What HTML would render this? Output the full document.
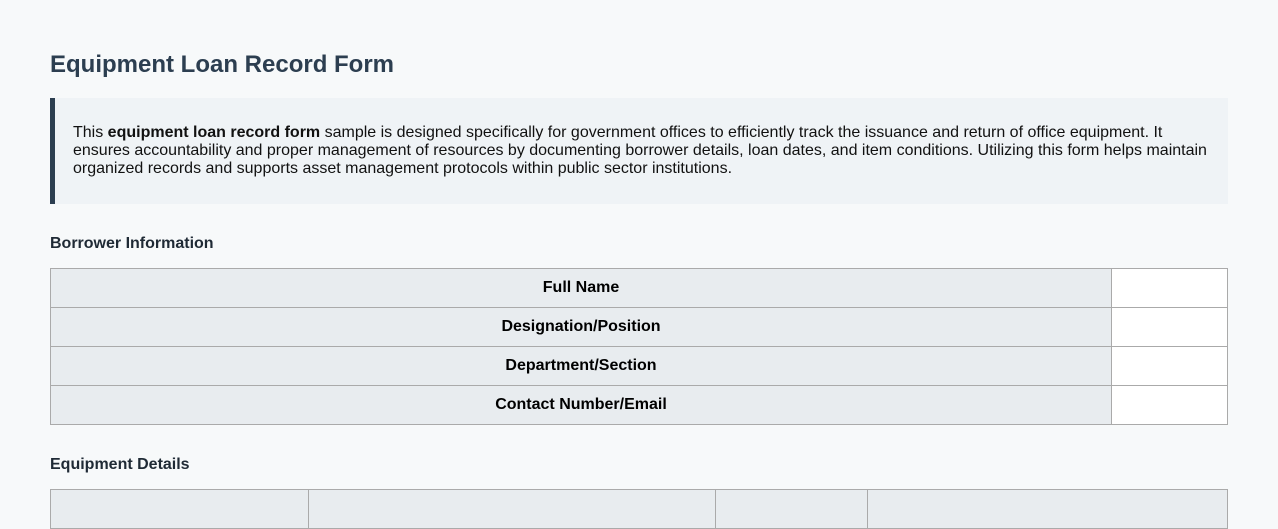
<!DOCTYPE html>
<html><head><style>
html,body{margin:0;height:501px;overflow:hidden}
body{background:#f7f9fa;font-family:"Liberation Sans",sans-serif;color:#111;}
.wrap{position:absolute;left:50px;width:1178px;top:0}
h1{position:absolute;top:51px;margin:0;font-size:24px;color:#2c3e50;font-weight:bold;line-height:28px}
.intro{position:absolute;top:98px;left:0;height:106px;background:#eff3f6;border-left:5px solid #2c3e50;width:1173px}
.intro p{margin:26px 0 0 18px;width:1140px;font-size:16px;line-height:18px}
h3{position:absolute;margin:0;font-size:16px;color:#1f2a35;font-weight:bold}
table{position:absolute;left:0;width:1178px;border-collapse:collapse}
td{border:1px solid #aaa;height:38px;padding:0;font-size:16px;font-weight:bold;text-align:center;color:#000}
td.l{background:#e8ecef}
td.v{background:#fff;width:115px}
</style></head><body>
<div class="wrap">
<h1>Equipment Loan Record Form</h1>
<div class="intro"><p>This <b>equipment loan record form</b> sample is designed specifically for government offices to efficiently track the issuance and return of office equipment. It ensures accountability and proper management of resources by documenting borrower details, loan dates, and item conditions. Utilizing this form helps maintain organized records and supports asset management protocols within public sector institutions.</p></div>
<h3 style="top:235px">Borrower Information</h3>
<table style="top:268px">
<tr><td class="l">Full Name</td><td class="v"></td></tr>
<tr><td class="l">Designation/Position</td><td class="v"></td></tr>
<tr><td class="l">Department/Section</td><td class="v"></td></tr>
<tr><td class="l">Contact Number/Email</td><td class="v"></td></tr>
</table>
<h3 style="top:456px">Equipment Details</h3>
<table style="top:489px">
<tr><td class="l" style="width:257px"></td><td class="l" style="width:406px"></td><td class="l" style="width:151px"></td><td class="l"></td></tr>
</table>
</div>
</body></html>
